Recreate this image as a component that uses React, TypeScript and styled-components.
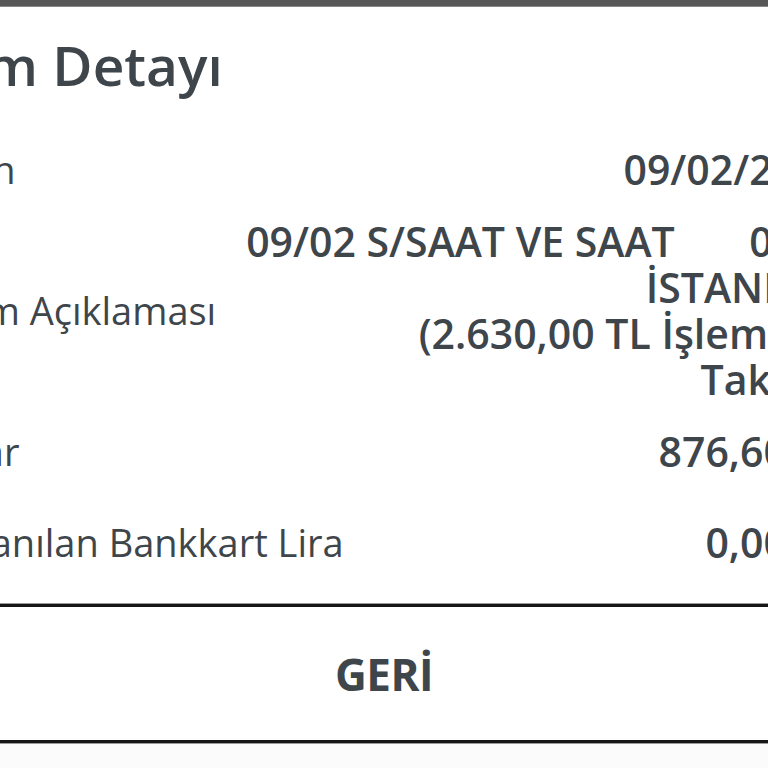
import React from "react"
import styled, { createGlobalStyle } from "styled-components"

const GlobalStyle = createGlobalStyle`
    html, body {
        margin: 0;
        padding: 0;
        background: #fbfbfb;
    }
    body {
        font-family: "Open Sans", "Noto Sans", sans-serif;
        color: #3e454b;
        overflow: hidden;
    }
`

const Screen = styled.div`
    width: 768px;
    height: 768px;
    overflow: hidden;
    display: flex;
    flex-direction: column;
    background: #fbfbfb;
`

const StatusEdge = styled.div`
    height: 6px;
    flex-shrink: 0;
    background: #575757;
    border-bottom: 1px solid #888;
`

/* kartın sol/sağ kenarları ekranın dışında kalıyor */
const Sheet = styled.div`
    margin: 0 -100px;
    padding: 0 25px;
    background: #ffffff;
`

const Title = styled.h1`
    margin: 0 0 0 -30px;
    padding: 26px 0 36px;
    font-size: 55px;
    font-weight: 600;
    line-height: 64px;
    white-space: nowrap;
`

const DetailList = styled.dl`
    margin: 0;
    padding: 0;
`

const DetailRow = styled.div<{ $extra?: number }>`
    display: flex;
    align-items: center;
    justify-content: space-between;
    gap: 12px;
    padding: ${(p) => 13 + (p.$extra ?? 0)}px 0 13px;
`

const Label = styled.dt`
    margin: 0;
    font-size: 38px;
    font-weight: 400;
    line-height: 46px;
    white-space: nowrap;
`

const Value = styled.dd`
    margin: 0;
    flex-shrink: 0;
    font-size: 41px;
    font-weight: 600;
    line-height: 46px;
    text-align: right;
    white-space: pre;
`

const ValueLine = styled.span`
    display: block;
`

const Footer = styled.div`
    margin-top: 26px;
    border-top: 3px solid #161616;
    border-bottom: 3px solid #161616;
    box-shadow: 0 -1px 0 #9a9a9a, 0 1px 0 #9a9a9a;
    height: 133px;
    display: flex;
    align-items: center;
    justify-content: center;
`

const BackButton = styled.button`
    border: none;
    background: none;
    padding: 0;
    font-family: inherit;
    font-size: 44px;
    font-weight: 700;
    color: #3e454b;
    letter-spacing: -0.5px;
    cursor: pointer;
`

type Detail = { label: string; lines: string[]; extra?: number }

const details: Detail[] = [
    { label: "Tarih", lines: ["09/02/2024"] },
    {
        label: "İşlem Açıklaması",
        lines: [
            "09/02 S/SAAT VE SAAT       0438",
            "İSTANBUL",
            "(2.630,00 TL İşleminin",
            "Taksiti)",
        ],
    },
    { label: "Tutar", lines: ["876,60 TL"] },
    { label: "Kullanılan Bankkart Lira", lines: ["0,00 TL"], extra: 19 },
]

export default function App() {
    return (
        <Screen>
            <GlobalStyle />
            <StatusEdge />
            <Sheet>
                <Title>İşlem Detayı</Title>
                <DetailList>
                    {details.map((d) => (
                        <DetailRow key={d.label} $extra={d.extra}>
                            <Label>{d.label}</Label>
                            <Value>
                                {d.lines.map((line) => (
                                    <ValueLine key={line}>{line}</ValueLine>
                                ))}
                            </Value>
                        </DetailRow>
                    ))}
                </DetailList>
                <Footer>
                    <BackButton type="button">GERİ</BackButton>
                </Footer>
            </Sheet>
        </Screen>
    )
}
